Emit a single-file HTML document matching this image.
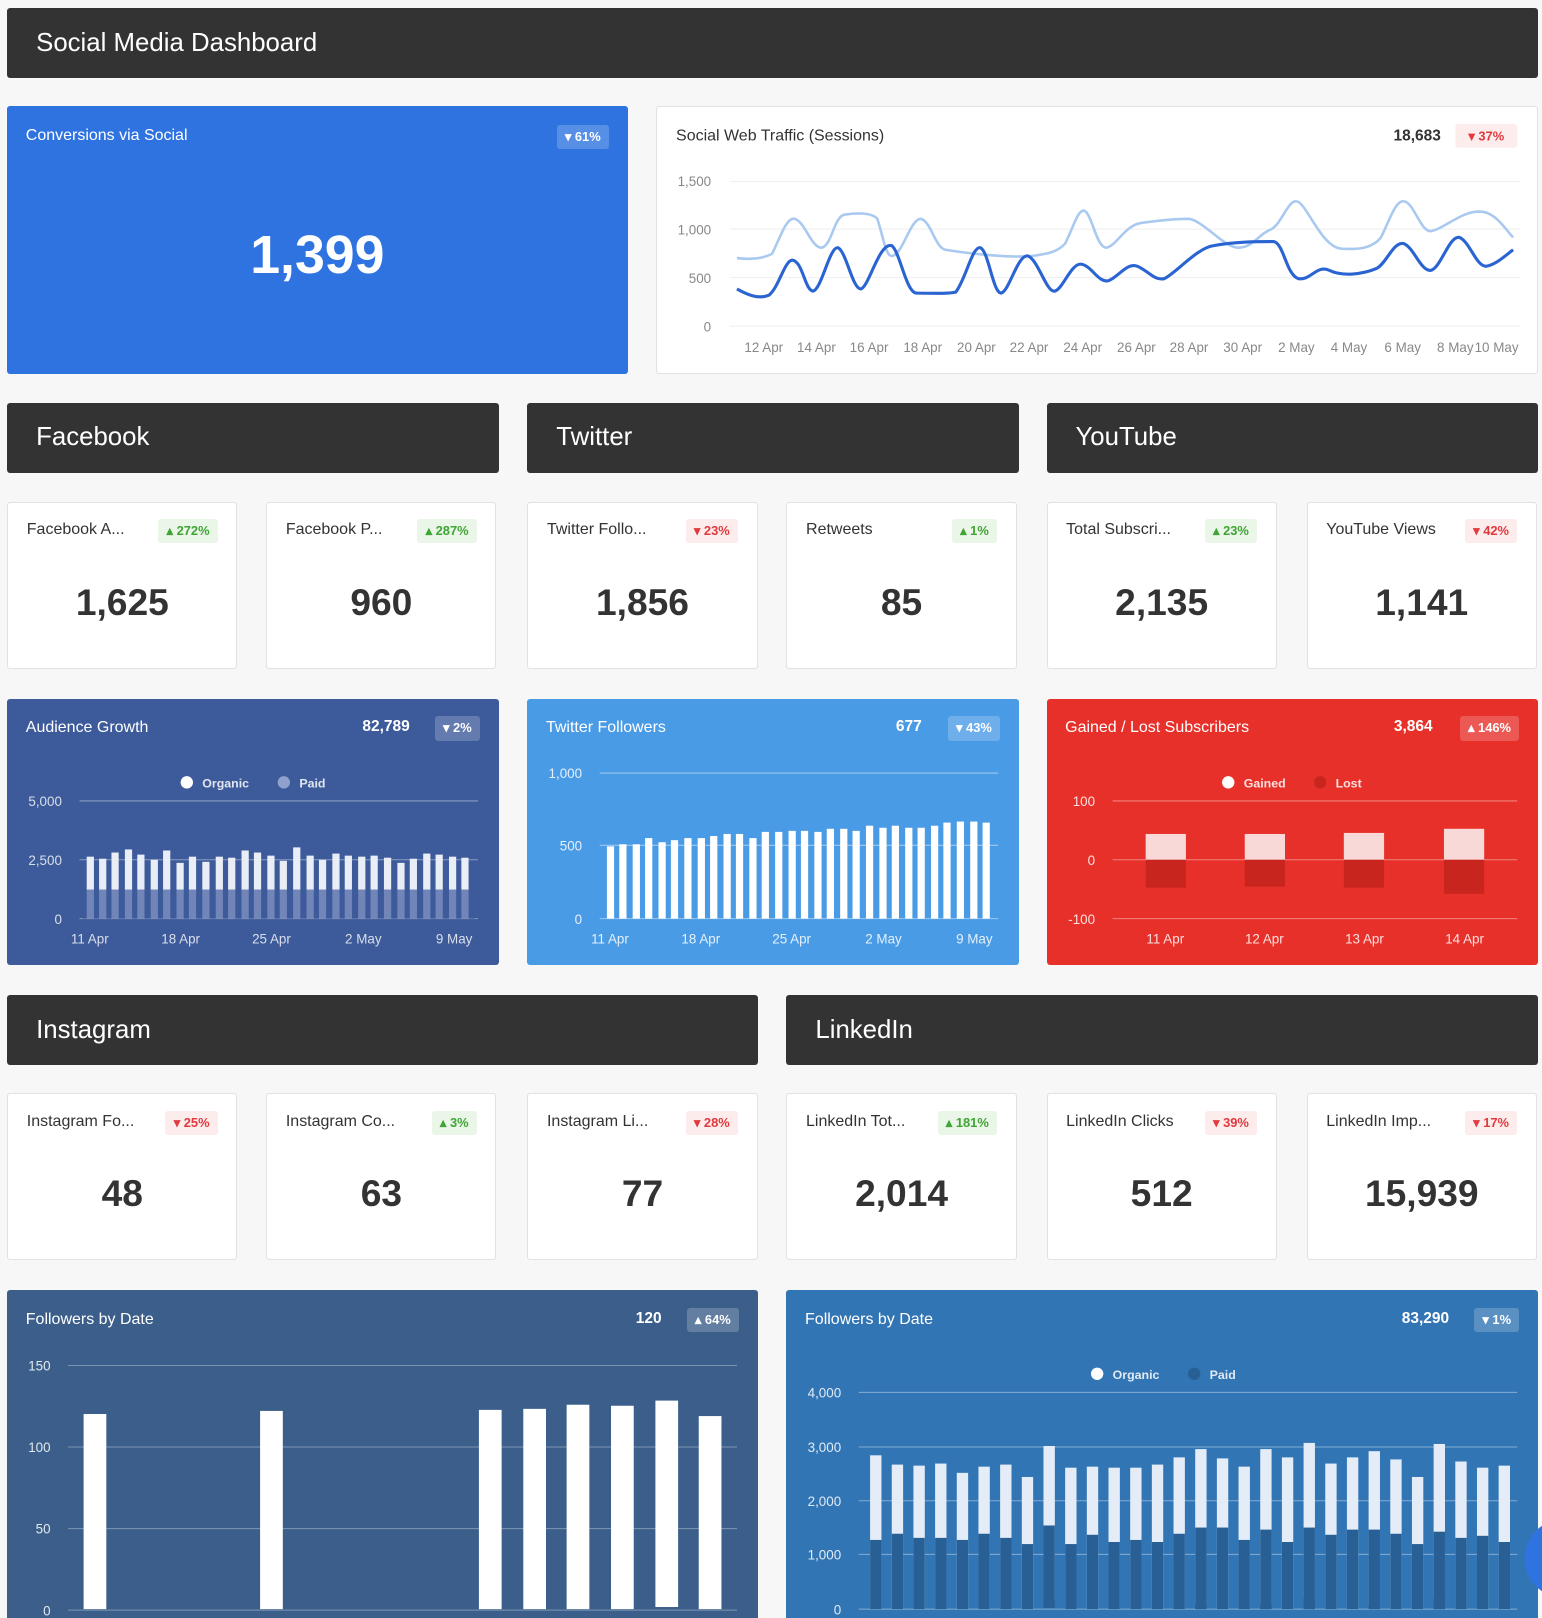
<!DOCTYPE html>
<html><head><meta charset="utf-8"><style>
*{margin:0;padding:0;box-sizing:border-box}
html,body{width:1542px;height:1618px;overflow:hidden;background:#f7f7f7}
#w{zoom:1.03213;position:relative;width:1494px;height:1568px;font-family:"Liberation Sans",sans-serif;color:#333}
.a{position:absolute}
.hd{position:absolute;background:#333;border-radius:3px;color:#fff;font-size:25px;padding-left:28px;display:flex;align-items:center;height:68px}
.card{position:absolute;background:#fff;border:1px solid #e2e2e2;border-radius:3px}
.kt{position:absolute;left:18px;top:18px;font-size:15.5px;color:#333}
.bd{position:absolute;top:16px;right:18px;font-size:12.5px;font-weight:bold;padding:4px 8px;border-radius:3px}
.g{background:#eaf6e8;color:#3fa535}.r{background:#fdecec;color:#e0393e}
.kv{position:absolute;left:0;right:0;top:76px;text-align:center;font-size:36px;font-weight:bold;color:#333}
.ch{position:absolute;border-radius:3px;overflow:hidden;color:#fff}
.ct{position:absolute;left:18px;top:20px;font-size:15.5px}
.cn{position:absolute;top:19px;font-size:15px;font-weight:bold}
.cb{position:absolute;top:17px;right:18px;font-size:12.5px;font-weight:bold;padding:4px 8px;border-radius:3px;background:rgba(255,255,255,.2)}
svg text{font-family:"Liberation Sans",sans-serif}
</style></head><body><div id="w">
<div class="hd" style="left:7px;top:8px;width:1483px">Social Media Dashboard</div>

<div class="ch" style="left:7px;top:103px;width:601px;height:259px;background:#2f73e0">
<div class="ct" style="top:20px">Conversions via Social</div><div class="cb" style="top:18px">▾ 61%</div>
<div class="a" style="left:0;right:0;top:114px;text-align:center;font-size:52px;font-weight:bold">1,399</div></div>

<div class="card" style="left:636px;top:103px;width:854px;height:259px"></div>
<svg class="a" style="left:0;top:0" width="1494" height="1568">
<text x="655" y="136" font-size="15.5" fill="#333">Social Web Traffic (Sessions)</text>
<text x="1396" y="136" font-size="15" font-weight="bold" fill="#333" text-anchor="end">18,683</text>
<rect x="1410" y="120" width="60" height="23" rx="3" fill="#fdecec"/><text x="1440" y="136" font-size="12.5" font-weight="bold" fill="#e0393e" text-anchor="middle">▾ 37%</text>
<g stroke="#eee"><line x1="707" x2="1472" y1="176" y2="176"/><line x1="707" x2="1472" y1="222" y2="222"/><line x1="707" x2="1472" y1="269" y2="269"/><line x1="707" x2="1472" y1="316" y2="316"/></g>
<g font-size="13" fill="#888" text-anchor="end"><text x="689" y="180">1,500</text><text x="689" y="227">1,000</text><text x="689" y="274">500</text><text x="689" y="321">0</text></g>
<g font-size="13" fill="#888" text-anchor="middle"><text x="740" y="341">12 Apr</text><text x="791" y="341">14 Apr</text><text x="842" y="341">16 Apr</text><text x="894" y="341">18 Apr</text><text x="946" y="341">20 Apr</text><text x="997" y="341">22 Apr</text><text x="1049" y="341">24 Apr</text><text x="1101" y="341">26 Apr</text><text x="1152" y="341">28 Apr</text><text x="1204" y="341">30 Apr</text><text x="1256" y="341">2 May</text><text x="1307" y="341">4 May</text><text x="1359" y="341">6 May</text><text x="1410" y="341">8 May</text><text x="1450" y="341">10 May</text></g>
<path fill="none" stroke="#a9c9f0" stroke-width="2.5" d="M714 250 C730 252,740 250,748 246 C756 230,762 210,770 212 C780 215,786 240,796 240 C806 238,808 210,818 208 C830 206,845 206,850 212 C856 230,858 248,864 248 C874 248,882 212,892 212 C902 214,906 240,916 242 C940 246,980 250,1000 248 C1015 246,1025 244,1032 236 C1040 220,1044 204,1050 204 C1058 206,1062 240,1072 240 C1082 238,1090 218,1106 216 C1120 214,1140 212,1152 212 C1166 214,1186 240,1200 240 C1214 240,1220 226,1232 222 C1242 216,1248 194,1256 195 C1266 196,1280 240,1300 241 C1318 242,1330 240,1338 230 C1346 214,1352 194,1360 195 C1370 196,1376 224,1386 224 C1400 222,1420 200,1440 206 C1452 210,1460 224,1466 230"/>
<path fill="none" stroke="#2a64d2" stroke-width="3" d="M714 280 C725 286,735 290,745 286 C755 278,760 252,768 252 C778 254,780 282,788 282 C796 280,804 238,812 240 C820 244,826 280,834 280 C842 278,852 234,864 238 C872 244,878 284,888 284 C902 284,918 285,926 283 C936 270,942 238,950 240 C958 244,962 284,970 284 C978 282,986 246,996 248 C1006 252,1014 284,1022 282 C1030 280,1038 254,1048 256 C1058 258,1064 274,1074 272 C1084 268,1092 254,1102 258 C1112 262,1118 272,1128 270 C1140 264,1160 240,1176 238 C1196 234,1220 234,1234 234 C1244 236,1246 266,1258 270 C1270 272,1276 256,1288 262 C1300 268,1320 266,1334 260 C1344 254,1350 234,1360 236 C1370 240,1376 262,1386 262 C1396 260,1404 228,1414 230 C1424 234,1430 258,1440 258 C1450 256,1458 248,1466 242"/>
</svg>

<div class="hd" style="left:7px;top:390px;width:476px">Facebook</div>
<div class="hd" style="left:511px;top:390px;width:476px">Twitter</div>
<div class="hd" style="left:1014px;top:390px;width:476px">YouTube</div>

<div class="card" style="left:7px;top:486px;width:223px;height:162px"><div class="kt">Facebook A...</div><div class="bd g">▴ 272%</div><div class="kv">1,625</div></div>
<div class="card" style="left:258px;top:486px;width:223px;height:162px"><div class="kt">Facebook P...</div><div class="bd g">▴ 287%</div><div class="kv">960</div></div>
<div class="card" style="left:511px;top:486px;width:223px;height:162px"><div class="kt">Twitter Follo...</div><div class="bd r">▾ 23%</div><div class="kv">1,856</div></div>
<div class="card" style="left:762px;top:486px;width:223px;height:162px"><div class="kt">Retweets</div><div class="bd g">▴ 1%</div><div class="kv">85</div></div>
<div class="card" style="left:1014px;top:486px;width:223px;height:162px"><div class="kt">Total Subscri...</div><div class="bd g">▴ 23%</div><div class="kv">2,135</div></div>
<div class="card" style="left:1266px;top:486px;width:223px;height:162px"><div class="kt">YouTube Views</div><div class="bd r">▾ 42%</div><div class="kv">1,141</div></div>

<div class="ch" style="left:7px;top:677px;width:476px;height:258px;background:#3d5a9a"><div class="ct">Audience Growth</div><div class="cn" style="right:86px">82,789</div><div class="cb">▾ 2%</div></div>
<div class="ch" style="left:511px;top:677px;width:476px;height:258px;background:#4a9be6"><div class="ct">Twitter Followers</div><div class="cn" style="right:94px">677</div><div class="cb">▾ 43%</div></div>
<div class="ch" style="left:1014px;top:677px;width:476px;height:258px;background:#e8302a"><div class="ct">Gained / Lost Subscribers</div><div class="cn" style="right:102px">3,864</div><div class="cb">▴ 146%</div></div>

<div class="hd" style="left:7px;top:964px;width:727px">Instagram</div>
<div class="hd" style="left:762px;top:964px;width:728px">LinkedIn</div>

<div class="card" style="left:7px;top:1059px;width:223px;height:162px"><div class="kt">Instagram Fo...</div><div class="bd r">▾ 25%</div><div class="kv">48</div></div>
<div class="card" style="left:258px;top:1059px;width:223px;height:162px"><div class="kt">Instagram Co...</div><div class="bd g">▴ 3%</div><div class="kv">63</div></div>
<div class="card" style="left:511px;top:1059px;width:223px;height:162px"><div class="kt">Instagram Li...</div><div class="bd r">▾ 28%</div><div class="kv">77</div></div>
<div class="card" style="left:762px;top:1059px;width:223px;height:162px"><div class="kt">LinkedIn Tot...</div><div class="bd g">▴ 181%</div><div class="kv">2,014</div></div>
<div class="card" style="left:1014px;top:1059px;width:223px;height:162px"><div class="kt">LinkedIn Clicks</div><div class="bd r">▾ 39%</div><div class="kv">512</div></div>
<div class="card" style="left:1266px;top:1059px;width:223px;height:162px"><div class="kt">LinkedIn Imp...</div><div class="bd r">▾ 17%</div><div class="kv">15,939</div></div>

<div class="ch" style="left:7px;top:1250px;width:727px;height:330px;background:#3b5f8a"><div class="ct">Followers by Date</div><div class="cn" style="right:93px">120</div><div class="cb">▴ 64%</div></div>
<div class="ch" style="left:762px;top:1250px;width:728px;height:330px;background:#3275b4"><div class="ct">Followers by Date</div><div class="cn" style="right:86px">83,290</div><div class="cb">▾ 1%</div></div>

<svg class="a" style="left:0;top:0" width="1494" height="1568">
<defs><clipPath id="cp"><rect x="0" y="0" width="1494" height="1559"/></clipPath></defs>
<!-- Audience growth -->
<g font-size="12" font-weight="bold" fill="#fff" fill-opacity=".85"><circle cx="181" cy="758" r="6" fill="#fff" fill-opacity="1"/><text x="196" y="763">Organic</text><circle cx="275" cy="758" r="6" fill="#8ea0cc" fill-opacity="1"/><text x="290" y="763">Paid</text></g>
<g stroke="#fff" stroke-opacity=".4"><line x1="77" x2="463" y1="776" y2="776"/><line x1="77" x2="463" y1="833" y2="833"/><line x1="77" x2="463" y1="890" y2="890"/></g>
<g font-size="13" fill="#fff" fill-opacity=".8" text-anchor="end"><text x="60" y="781">5,000</text><text x="60" y="838">2,500</text><text x="60" y="895">0</text></g>
<g font-size="13" fill="#fff" fill-opacity=".8" text-anchor="middle"><text x="87" y="914">11 Apr</text><text x="175" y="914">18 Apr</text><text x="263" y="914">25 Apr</text><text x="352" y="914">2 May</text><text x="440" y="914">9 May</text></g>
<g fill="#e9edf6">
<rect x="84" y="830" width="7" height="60"/><rect x="96" y="832" width="7" height="58"/><rect x="108" y="826" width="7" height="64"/><rect x="121" y="823" width="7" height="67"/><rect x="133" y="828" width="7" height="62"/><rect x="146" y="833" width="7" height="57"/><rect x="158" y="824" width="7" height="66"/><rect x="171" y="836" width="7" height="54"/><rect x="183" y="830" width="7" height="60"/><rect x="196" y="835" width="7" height="55"/><rect x="209" y="830" width="7" height="60"/><rect x="221" y="831" width="7" height="59"/><rect x="234" y="824" width="7" height="66"/><rect x="246" y="826" width="7" height="64"/><rect x="259" y="829" width="7" height="61"/><rect x="271" y="834" width="7" height="56"/><rect x="284" y="821" width="7" height="69"/><rect x="297" y="829" width="7" height="61"/><rect x="309" y="833" width="7" height="57"/><rect x="322" y="827" width="7" height="63"/><rect x="334" y="829" width="7" height="61"/><rect x="347" y="830" width="7" height="60"/><rect x="359" y="829" width="7" height="61"/><rect x="372" y="831" width="7" height="59"/><rect x="385" y="836" width="7" height="54"/><rect x="397" y="832" width="7" height="58"/><rect x="410" y="827" width="7" height="63"/><rect x="422" y="828" width="7" height="62"/><rect x="435" y="830" width="7" height="60"/><rect x="447" y="831" width="7" height="59"/>
</g>
<rect x="80" y="862" width="380" height="28" fill="#3d5a9a"/>
<g fill="#7285b9"><path d="M84 862h7v28h-7zM96 862h7v28h-7zM108 862h7v28h-7zM121 862h7v28h-7zM133 862h7v28h-7zM146 862h7v28h-7zM158 862h7v28h-7zM171 862h7v28h-7zM183 862h7v28h-7zM196 862h7v28h-7zM209 862h7v28h-7zM221 862h7v28h-7zM234 862h7v28h-7zM246 862h7v28h-7zM259 862h7v28h-7zM271 862h7v28h-7zM284 862h7v28h-7zM297 862h7v28h-7zM309 862h7v28h-7zM322 862h7v28h-7zM334 862h7v28h-7zM347 862h7v28h-7zM359 862h7v28h-7zM372 862h7v28h-7zM385 862h7v28h-7zM397 862h7v28h-7zM410 862h7v28h-7zM422 862h7v28h-7zM435 862h7v28h-7zM447 862h7v28h-7z"/></g>

<!-- Twitter followers -->
<g stroke="#fff" stroke-opacity=".45"><line x1="581" x2="967" y1="749" y2="749"/><line x1="581" x2="967" y1="819" y2="819"/><line x1="581" x2="967" y1="890" y2="890"/></g>
<g font-size="13" fill="#fff" fill-opacity=".85" text-anchor="end"><text x="564" y="754">1,000</text><text x="564" y="824">500</text><text x="564" y="895">0</text></g>
<g font-size="13" fill="#fff" fill-opacity=".85" text-anchor="middle"><text x="591" y="914">11 Apr</text><text x="679" y="914">18 Apr</text><text x="767" y="914">25 Apr</text><text x="856" y="914">2 May</text><text x="944" y="914">9 May</text></g>
<g fill="#fff">
<rect x="588" y="820" width="7" height="70"/><rect x="600" y="818" width="7" height="72"/><rect x="613" y="818" width="7" height="72"/><rect x="625" y="812" width="7" height="78"/><rect x="638" y="816" width="7" height="74"/><rect x="650" y="814" width="7" height="76"/><rect x="663" y="812" width="7" height="78"/><rect x="676" y="812" width="7" height="78"/><rect x="688" y="810" width="7" height="80"/><rect x="701" y="808" width="7" height="82"/><rect x="713" y="808" width="7" height="82"/><rect x="726" y="812" width="7" height="78"/><rect x="738" y="806" width="7" height="84"/><rect x="751" y="806" width="7" height="84"/><rect x="764" y="805" width="7" height="85"/><rect x="776" y="805" width="7" height="85"/><rect x="789" y="806" width="7" height="84"/><rect x="801" y="803" width="7" height="87"/><rect x="814" y="803" width="7" height="87"/><rect x="826" y="805" width="7" height="85"/><rect x="839" y="800" width="7" height="90"/><rect x="852" y="802" width="7" height="88"/><rect x="864" y="800" width="7" height="90"/><rect x="877" y="802" width="7" height="88"/><rect x="889" y="802" width="7" height="88"/><rect x="902" y="800" width="7" height="90"/><rect x="914" y="797" width="7" height="93"/><rect x="927" y="796" width="7" height="94"/><rect x="940" y="796" width="7" height="94"/><rect x="952" y="797" width="7" height="93"/>
</g>

<!-- Gained/Lost -->
<g font-size="12" font-weight="bold" fill="#fff" fill-opacity=".85"><circle cx="1190" cy="758" r="6" fill="#fff" fill-opacity="1"/><text x="1205" y="763">Gained</text><circle cx="1279" cy="758" r="6" fill="#c9251f" fill-opacity="1"/><text x="1294" y="763">Lost</text></g>
<g stroke="#fff" stroke-opacity=".4"><line x1="1078" x2="1470" y1="776" y2="776"/><line x1="1078" x2="1470" y1="833" y2="833"/><line x1="1078" x2="1470" y1="890" y2="890"/></g>
<g font-size="13" fill="#fff" fill-opacity=".85" text-anchor="end"><text x="1061" y="781">100</text><text x="1061" y="838">0</text><text x="1061" y="895">-100</text></g>
<g font-size="13" fill="#fff" fill-opacity=".85" text-anchor="middle"><text x="1129" y="914">11 Apr</text><text x="1225" y="914">12 Apr</text><text x="1322" y="914">13 Apr</text><text x="1419" y="914">14 Apr</text></g>
<g fill="#f8d9d7"><rect x="1110" y="808" width="39" height="25"/><rect x="1206" y="808" width="39" height="25"/><rect x="1302" y="807" width="39" height="26"/><rect x="1399" y="803" width="39" height="30"/></g>
<g fill="#c9251f"><rect x="1110" y="833" width="39" height="27"/><rect x="1206" y="833" width="39" height="26"/><rect x="1302" y="833" width="39" height="27"/><rect x="1399" y="833" width="39" height="33"/></g>

<!-- Instagram -->
<g stroke="#fff" stroke-opacity=".35"><line x1="66" x2="714" y1="1323" y2="1323"/><line x1="66" x2="714" y1="1402" y2="1402"/><line x1="66" x2="714" y1="1481" y2="1481"/><line x1="66" x2="714" y1="1560" y2="1560"/></g>
<g font-size="13" fill="#fff" fill-opacity=".85" text-anchor="end"><text x="49" y="1328">150</text><text x="49" y="1407">100</text><text x="49" y="1486">50</text><text x="49" y="1565">0</text></g>
<g fill="#fff" clip-path="url(#cp)"><rect x="81" y="1370" width="22" height="200"/><rect x="252" y="1367" width="22" height="200"/><rect x="464" y="1366" width="22" height="200"/><rect x="507" y="1365" width="22" height="200"/><rect x="549" y="1361" width="22" height="200"/><rect x="592" y="1362" width="22" height="200"/><rect x="635" y="1357" width="22" height="200"/><rect x="677" y="1372" width="22" height="200"/></g>

<!-- LinkedIn -->
<g font-size="12" font-weight="bold" fill="#fff" fill-opacity=".85"><circle cx="1063" cy="1331" r="6" fill="#fff" fill-opacity="1"/><text x="1078" y="1336">Organic</text><circle cx="1157" cy="1331" r="6" fill="#285f94" fill-opacity="1"/><text x="1172" y="1336">Paid</text></g>
<g stroke="#fff" stroke-opacity=".4"><line x1="832" x2="1470" y1="1349" y2="1349"/><line x1="832" x2="1470" y1="1402" y2="1402"/><line x1="832" x2="1470" y1="1454" y2="1454"/><line x1="832" x2="1470" y1="1506" y2="1506"/><line x1="832" x2="1470" y1="1559" y2="1559"/></g>
<g font-size="13" fill="#fff" fill-opacity=".85" text-anchor="end"><text x="815" y="1354">4,000</text><text x="815" y="1407">3,000</text><text x="815" y="1459">2,000</text><text x="815" y="1511">1,000</text><text x="815" y="1564">0</text></g>
<g clip-path="url(#cp)">
<g fill="#e4edf7">
<rect x="843" y="1410" width="11" height="150"/><rect x="864" y="1419" width="11" height="150"/><rect x="885" y="1420" width="11" height="150"/><rect x="906" y="1418" width="11" height="150"/><rect x="927" y="1427" width="11" height="150"/><rect x="948" y="1421" width="11" height="150"/><rect x="969" y="1419" width="11" height="150"/><rect x="990" y="1431" width="11" height="150"/><rect x="1011" y="1401" width="11" height="150"/><rect x="1032" y="1422" width="11" height="150"/><rect x="1053" y="1421" width="11" height="150"/><rect x="1074" y="1422" width="11" height="150"/><rect x="1095" y="1422" width="11" height="150"/><rect x="1116" y="1419" width="11" height="150"/><rect x="1137" y="1412" width="11" height="150"/><rect x="1158" y="1404" width="11" height="150"/><rect x="1179" y="1413" width="11" height="150"/><rect x="1200" y="1421" width="11" height="150"/><rect x="1221" y="1404" width="11" height="150"/><rect x="1242" y="1412" width="11" height="150"/><rect x="1263" y="1398" width="11" height="150"/><rect x="1284" y="1418" width="11" height="150"/><rect x="1305" y="1412" width="11" height="150"/><rect x="1326" y="1406" width="11" height="150"/><rect x="1347" y="1414" width="11" height="150"/><rect x="1368" y="1431" width="11" height="150"/><rect x="1389" y="1399" width="11" height="150"/><rect x="1410" y="1416" width="11" height="150"/><rect x="1431" y="1422" width="11" height="150"/><rect x="1452" y="1420" width="11" height="150"/>
</g>
<g fill="#285f94">
<rect x="843" y="1492" width="11" height="80"/><rect x="864" y="1486" width="11" height="80"/><rect x="885" y="1490" width="11" height="80"/><rect x="906" y="1490" width="11" height="80"/><rect x="927" y="1492" width="11" height="80"/><rect x="948" y="1486" width="11" height="80"/><rect x="969" y="1490" width="11" height="80"/><rect x="990" y="1496" width="11" height="80"/><rect x="1011" y="1478" width="11" height="80"/><rect x="1032" y="1496" width="11" height="80"/><rect x="1053" y="1487" width="11" height="80"/><rect x="1074" y="1494" width="11" height="80"/><rect x="1095" y="1492" width="11" height="80"/><rect x="1116" y="1494" width="11" height="80"/><rect x="1137" y="1486" width="11" height="80"/><rect x="1158" y="1480" width="11" height="80"/><rect x="1179" y="1480" width="11" height="80"/><rect x="1200" y="1492" width="11" height="80"/><rect x="1221" y="1482" width="11" height="80"/><rect x="1242" y="1494" width="11" height="80"/><rect x="1263" y="1480" width="11" height="80"/><rect x="1284" y="1487" width="11" height="80"/><rect x="1305" y="1482" width="11" height="80"/><rect x="1326" y="1482" width="11" height="80"/><rect x="1347" y="1486" width="11" height="80"/><rect x="1368" y="1496" width="11" height="80"/><rect x="1389" y="1484" width="11" height="80"/><rect x="1410" y="1490" width="11" height="80"/><rect x="1431" y="1488" width="11" height="80"/><rect x="1452" y="1494" width="11" height="80"/>
</g>
</g>
<circle cx="1515" cy="1510" r="38" fill="#2f73e0"/>
</svg>
</div></body></html>
